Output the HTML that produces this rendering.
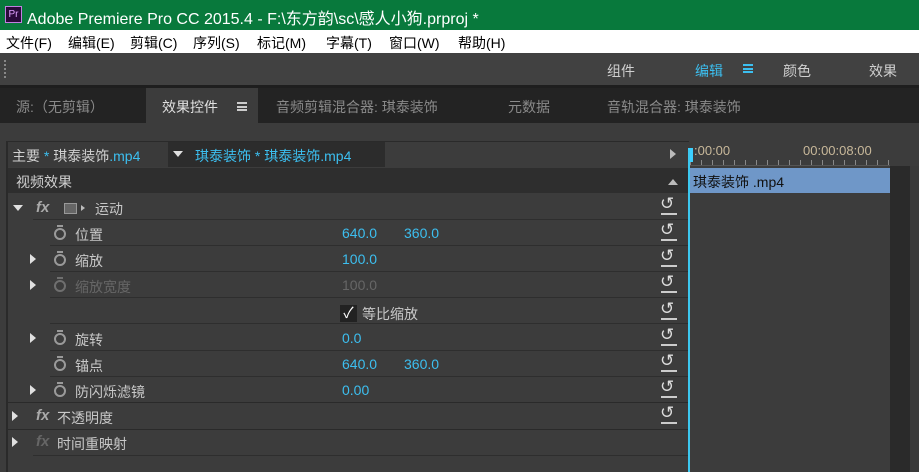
<!DOCTYPE html>
<html><head><meta charset="utf-8"><style>
*{margin:0;padding:0;box-sizing:border-box}
body{width:919px;height:472px;overflow:hidden;background:#3c3c3c;font-family:"Liberation Sans","Noto Sans CJK SC",sans-serif;font-size:14px;color:#c8c8c8;position:relative}
.a{position:absolute;white-space:nowrap}
.b{color:#3cbff0}
.m{position:absolute;top:33px;color:#000;font-size:14px;white-space:nowrap}
.line{position:absolute;height:1px;background:#2e2e2e}
.sw{position:absolute;width:12px;height:12px;border:2px solid #9a9a9a;border-radius:50%}
.sw:before{content:"";position:absolute;left:1px;top:-5px;width:6px;height:2px;background:#9a9a9a}
.tri{position:absolute;width:0;height:0;border-top:5px solid transparent;border-bottom:5px solid transparent;border-left:6px solid #e0e0e0}
.dn{position:absolute;width:0;height:0;border-left:5px solid transparent;border-right:5px solid transparent;border-top:6px solid #e0e0e0}
.fx{position:absolute;font-family:"Liberation Sans",sans-serif;font-weight:bold;font-style:italic;font-size:15px;color:#aaa}
.rs{position:absolute;left:660px;color:#ddd;font-size:17px;line-height:16px}
.rs:after{content:"";position:absolute;left:1px;top:17px;width:16px;height:2px;background:#ccc}
</style></head><body>
<div class="a" style="left:0;top:0;width:919px;height:30px;background:#08793c"></div>
<div class="a" style="left:5px;top:6px;width:17px;height:17px;background:#2a0a3a;border:1px solid #c080e0;color:#e0a0ff;font-size:10px;line-height:15px;text-align:center">Pr</div>
<div class="a" style="left:27px;top:5px;color:#fff;font-size:16px">Adobe Premiere Pro CC 2015.4 - F:\东方韵\sc\感人小狗.prproj *</div>
<div class="a" style="left:0;top:30px;width:919px;height:23px;background:#fff"></div>
<div class="m" style="left:6px">文件(F)</div>
<div class="m" style="left:68px">编辑(E)</div>
<div class="m" style="left:130px">剪辑(C)</div>
<div class="m" style="left:193px">序列(S)</div>
<div class="m" style="left:257px">标记(M)</div>
<div class="m" style="left:326px">字幕(T)</div>
<div class="m" style="left:389px">窗口(W)</div>
<div class="m" style="left:458px">帮助(H)</div>
<div class="a" style="left:0;top:53px;width:919px;height:32px;background:#414141"></div>
<div class="a" style="left:4px;top:60px;width:2px;height:18px;border-left:2px dotted #888"></div>
<div class="a" style="left:607px;top:61px;color:#d0d0d0">组件</div>
<div class="a b" style="left:695px;top:61px">编辑</div>
<div class="a" style="left:743px;top:64px;width:10px;height:9px;border-top:2px solid #3cbff0;border-bottom:2px solid #3cbff0"><div style="margin-top:1.5px;height:2px;background:#3cbff0"></div></div>
<div class="a" style="left:783px;top:61px;color:#d0d0d0">颜色</div>
<div class="a" style="left:869px;top:61px;color:#d0d0d0">效果</div>
<div class="a" style="left:0;top:85px;width:919px;height:3px;background:#1e1e1e"></div>
<div class="a" style="left:0;top:88px;width:919px;height:35px;background:#232323"></div>
<div class="a" style="left:146px;top:88px;width:112px;height:35px;background:#3c3c3c"></div>
<div class="a" style="left:16px;top:97px;color:#8a8a8a">源:（无剪辑）</div>
<div class="a" style="left:162px;top:97px;color:#e0e0e0">效果控件</div>
<div class="a" style="left:237px;top:102px;width:10px;height:9px;border-top:2px solid #ccc;border-bottom:2px solid #ccc"><div style="margin-top:1.5px;height:2px;background:#ccc"></div></div>
<div class="a" style="left:276px;top:97px;color:#8a8a8a">音频剪辑混合器: 琪泰装饰</div>
<div class="a" style="left:508px;top:97px;color:#8a8a8a">元数据</div>
<div class="a" style="left:607px;top:97px;color:#8a8a8a">音轨混合器: 琪泰装饰</div>
<div class="a" style="left:6px;top:141px;width:683px;height:331px;background:#2a2a2a"></div>
<div class="a" style="left:8px;top:142px;width:681px;height:330px;background:#3c3c3c"></div>
<div class="a" style="left:8px;top:142px;width:160px;height:25px;background:#3a3a3a"></div>
<div class="a" style="left:168px;top:142px;width:217px;height:25px;background:#2c2c2c"></div>
<div class="a" style="left:12px;top:146px;color:#d0d0d0">主要 <span class="b">*</span> 琪泰装饰<span class="b">.mp4</span></div>
<div class="dn" style="left:173px;top:151px"></div>
<div class="a b" style="left:195px;top:146px">琪泰装饰 * 琪泰装饰.mp4</div>
<div class="tri" style="left:670px;top:149px;border-left-color:#bbb"></div>
<div class="a" style="left:8px;top:168px;width:681px;height:25px;background:#2e2e2e"></div>
<div class="a" style="left:16px;top:172px;color:#d0d0d0">视频效果</div>
<div class="dn" style="left:668px;top:179px;border-top:none;border-bottom:6px solid #bbb"></div>
<div class="line" style="left:33px;top:219px;width:656px"></div>
<div class="line" style="left:50px;top:245px;width:639px"></div>
<div class="line" style="left:50px;top:271px;width:639px"></div>
<div class="line" style="left:50px;top:297px;width:639px"></div>
<div class="line" style="left:50px;top:323px;width:639px"></div>
<div class="line" style="left:50px;top:350px;width:639px"></div>
<div class="line" style="left:50px;top:376px;width:639px"></div>
<div class="line" style="left:8px;top:402px;width:681px;background:#2a2a2a"></div>
<div class="line" style="left:8px;top:429px;width:681px;background:#2a2a2a"></div>
<div class="line" style="left:33px;top:455px;width:656px"></div>

<div class="dn" style="left:13px;top:205px"></div>
<div class="fx" style="left:36px;top:199px">fx</div>
<div class="a" style="left:64px;top:203px;width:13px;height:11px;background:#666;border:1px solid #999"></div>
<div class="a" style="left:81px;top:205px;width:0;height:0;border-top:3px solid transparent;border-bottom:3px solid transparent;border-left:4px solid #bbb"></div>
<div class="a" style="left:95px;top:199px">运动</div>

<div class="sw" style="left:54px;top:228px"></div><div class="a" style="left:75px;top:225px">位置</div>
<div class="a b" style="left:342px;top:225px">640.0</div><div class="a b" style="left:404px;top:225px">360.0</div>
<div class="tri" style="left:30px;top:254px"></div>
<div class="sw" style="left:54px;top:254px"></div><div class="a" style="left:75px;top:251px">缩放</div>
<div class="a b" style="left:342px;top:251px">100.0</div>
<div class="tri" style="left:30px;top:280px"></div>
<div class="sw" style="left:54px;top:280px;opacity:.55"></div><div class="a" style="left:75px;top:277px;color:#666">缩放宽度</div>
<div class="a" style="left:342px;top:277px;color:#666">100.0</div>
<div class="a" style="left:340px;top:305px;width:17px;height:17px;background:#222;color:#fff;font-size:15px;line-height:17px;text-align:center">✓</div>
<div class="a" style="left:362px;top:304px">等比缩放</div>
<div class="tri" style="left:30px;top:333px"></div>
<div class="sw" style="left:54px;top:333px"></div><div class="a" style="left:75px;top:330px">旋转</div>
<div class="a b" style="left:342px;top:330px">0.0</div>
<div class="sw" style="left:54px;top:359px"></div><div class="a" style="left:75px;top:356px">锚点</div>
<div class="a b" style="left:342px;top:356px">640.0</div><div class="a b" style="left:404px;top:356px">360.0</div>
<div class="tri" style="left:30px;top:385px"></div>
<div class="sw" style="left:54px;top:385px"></div><div class="a" style="left:75px;top:382px">防闪烁滤镜</div>
<div class="a b" style="left:342px;top:382px">0.00</div>
<div class="tri" style="left:12px;top:411px"></div>
<div class="fx" style="left:36px;top:407px">fx</div><div class="a" style="left:57px;top:408px">不透明度</div>
<div class="tri" style="left:12px;top:437px"></div>
<div class="fx" style="left:36px;top:433px;color:#666">fx</div><div class="a" style="left:57px;top:434px">时间重映射</div>

<div class="rs" style="top:196px">↺</div>
<div class="rs" style="top:222px">↺</div>
<div class="rs" style="top:248px">↺</div>
<div class="rs" style="top:274px">↺</div>
<div class="rs" style="top:301px">↺</div>
<div class="rs" style="top:327px">↺</div>
<div class="rs" style="top:353px">↺</div>
<div class="rs" style="top:379px">↺</div>
<div class="rs" style="top:405px">↺</div>
<div class="a" style="left:689px;top:141px;width:230px;height:331px;background:#3c3c3c"></div>
<div class="a" style="left:690px;top:165px;width:200px;height:1px;background:#555"></div>
<div class="a" style="left:694px;top:143px;font-size:13px;color:#c8b89a">:00:00</div>
<div class="a" style="left:803px;top:143px;font-size:13px;color:#c8b89a">00:00:08:00</div>
<div class="a" style="left:690px;top:160px;width:200px;height:5px;background:repeating-linear-gradient(90deg,#888 0 1px,transparent 1px 11px)"></div>
<div class="a" style="left:890px;top:166px;width:20px;height:306px;background:#2a2a2a"></div>
<div class="a" style="left:910px;top:166px;width:9px;height:306px;background:#3a3a3a"></div>
<div class="a" style="left:690px;top:168px;width:200px;height:25px;background:#6f97c8"></div>
<div class="a" style="left:693px;top:172px;color:#111">琪泰装饰 .mp4</div>
<div class="a" style="left:688px;top:148px;width:5px;height:14px;background:#3cd0ff"></div>
<div class="a" style="left:688px;top:150px;width:2px;height:322px;background:#3cc8f0"></div>
</body></html>
